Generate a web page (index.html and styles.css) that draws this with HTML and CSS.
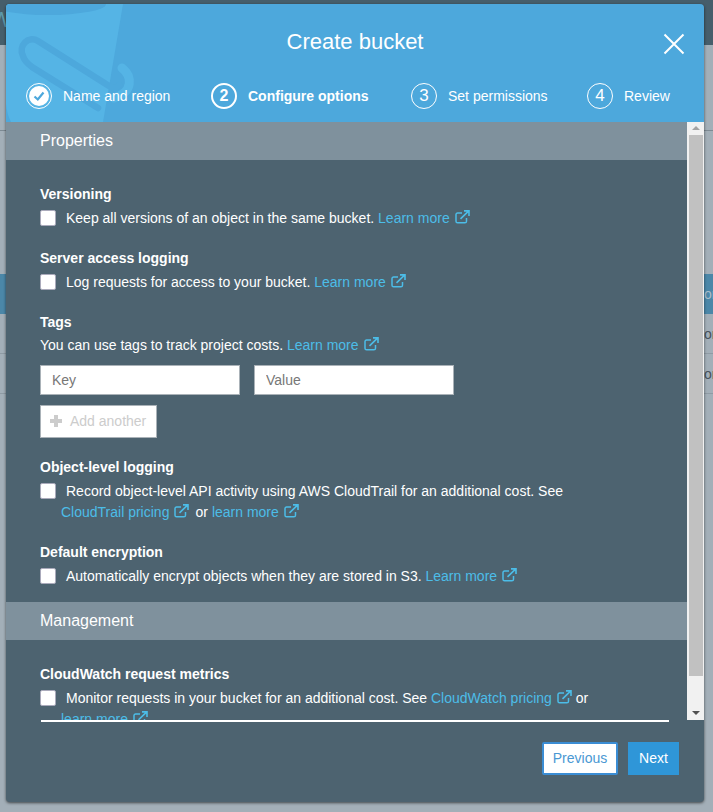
FILE: index.html
```html
<!DOCTYPE html>
<html lang="en">
<head>
  <meta charset="utf-8" />
  <title>Create bucket</title>
  <link rel="stylesheet" href="styles.css">
</head>
<body>
  <svg class="defs" width="0" height="0">
    <symbol id="ext" viewBox="0 0 15 14">
      <path d="M11.5 8v3.2a1.6 1.6 0 0 1-1.6 1.6H2.6A1.6 1.6 0 0 1 1 11.2V4.6A1.6 1.6 0 0 1 2.6 3H7" fill="none" stroke="currentColor" stroke-width="1.5"/>
      <path d="M5.5 8.8 13 1.6M9 .9h5v5" fill="none" stroke="currentColor" stroke-width="1.6"/>
    </symbol>
  </svg>

  <!-- page behind the dialog -->
  <div class="page">
    <div class="topbar"><span class="topbar-text">W</span></div>
    <div class="rule"></div>
    <div class="table">
      <div class="row row-head">on</div>
      <div class="row">on</div>
      <div class="row">on</div>
    </div>
  </div>

  <div class="modal">
    <header class="modal-head">
      <svg class="watermark" width="135" height="118" viewBox="0 0 135 118">
        <path d="M0 0H117L97 118H5Q1 110 0 100Z" fill="#55b4e5"/>
        <ellipse cx="42" cy="0" rx="58" ry="11" fill="#4da8dc"/>
        <path d="M116 64C126 72 128 88 108 94" stroke="#55b4e5" stroke-width="9" stroke-linecap="round" fill="none"/>
        <path d="M32 37 103 82C107 85 111 84 113 81M32 37C22 31 12 42 17 52 18 56 22 60 26 63L92 104" stroke="#4da8dc" stroke-width="6.5" stroke-linecap="round" fill="none"/>
      </svg>
      <h1 class="modal-title">Create bucket</h1>
      <button class="close" aria-label="Close">
        <svg width="22" height="22" viewBox="0 0 22 22"><path d="M1.5 1.5 20.5 20.5M20.5 1.5 1.5 20.5" stroke="#fff" stroke-width="2" fill="none"/></svg>
      </button>
      <ol class="steps">
        <li class="step">
          <span class="num num-done">
            <svg width="20" height="20" viewBox="0 0 20 20"><circle cx="10" cy="10" r="10" fill="#fff"/><path d="M5.5 10.5 8.8 13.5 14.5 6.5" stroke="#4da8dc" stroke-width="2.2" fill="none"/></svg>
          </span>
          Name and region
        </li>
        <li class="step step-active"><span class="num">2</span>Configure options</li>
        <li class="step"><span class="num">3</span>Set permissions</li>
        <li class="step"><span class="num">4</span>Review</li>
      </ol>
    </header>

    <div class="modal-main">
      <div class="scroll">
        <h2 class="section-bar">Properties</h2>
        <div class="section">
          <div class="opt">
            <h3 class="opt-title">Versioning</h3>
            <p class="check-line"><span class="check"></span>Keep all versions of an object in the same bucket. <a class="link">Learn more<svg class="ext"><use href="#ext"/></svg></a></p>
          </div>
          <div class="opt">
            <h3 class="opt-title">Server access logging</h3>
            <p class="check-line"><span class="check"></span>Log requests for access to your bucket. <a class="link">Learn more<svg class="ext"><use href="#ext"/></svg></a></p>
          </div>
          <div class="opt opt-tags">
            <h3 class="opt-title">Tags</h3>
            <p class="plain-line">You can use tags to track project costs. <a class="link">Learn more<svg class="ext"><use href="#ext"/></svg></a></p>
            <div class="tag-inputs">
              <input class="input" placeholder="Key" />
              <input class="input" placeholder="Value" />
            </div>
            <button class="btn-add"><span class="plus"></span>Add another</button>
          </div>
          <div class="opt">
            <h3 class="opt-title">Object-level logging</h3>
            <p class="check-line"><span class="check"></span>Record object-level API activity using AWS CloudTrail for an additional cost. See</p>
            <p class="cont-line"><a class="link">CloudTrail pricing<svg class="ext"><use href="#ext"/></svg></a><span class="or">or</span><a class="link">learn more<svg class="ext"><use href="#ext"/></svg></a></p>
          </div>
          <div class="opt">
            <h3 class="opt-title">Default encryption</h3>
            <p class="check-line"><span class="check"></span>Automatically encrypt objects when they are stored in S3. <a class="link">Learn more<svg class="ext"><use href="#ext"/></svg></a></p>
          </div>
        </div>
        <h2 class="section-bar">Management</h2>
        <div class="section">
          <div class="opt">
            <h3 class="opt-title">CloudWatch request metrics</h3>
            <p class="check-line"><span class="check"></span>Monitor requests in your bucket for an additional cost. See <a class="link">CloudWatch pricing<svg class="ext"><use href="#ext"/></svg></a> or</p>
            <p class="cont-line"><a class="link">learn more<svg class="ext"><use href="#ext"/></svg></a></p>
          </div>
        </div>
      </div>
      <div class="scrollbar">
        <span class="arrow arrow-up"></span>
        <span class="thumb"></span>
        <span class="arrow arrow-down"></span>
      </div>
    </div>

    <footer class="modal-foot">
      <button class="btn btn-prev">Previous</button>
      <button class="btn btn-next">Next</button>
    </footer>
  </div>
</body>
</html>
```

FILE: styles.css
```css
:root{
  --blue:#4da8dc;
  --slate:#4d6370;
  --bar:#7f919d;
  --link:#4cbde8;
}

* { box-sizing: border-box; }

html, body { height:100%; }

body{
  margin:0; overflow:hidden;
  font-family:"Liberation Sans", Arial, sans-serif; font-size:14px; color:#fff;
  background:#a3afb8;
}

.defs{ position:absolute; }

/* backdrop */
.page{ height:812px; overflow:hidden; }
.topbar{ height:45px; background:#465e6b; color:#5d98a8; font-size:22px; line-height:40px; overflow:hidden; }
.topbar-text{ margin-left:-9px; }
.rule{ height:1px; margin-top:85px; background:#7d8a93; }
.table{ margin-top:143px; }
.row{ height:40px; padding-left:704px; line-height:40px; color:#47535c; border-bottom:1px solid #8f9ba4; white-space:nowrap; overflow:hidden; }
.row-head{ background:#4b87a8; color:#a9bdca; border-bottom:0; }

/* dialog */
.modal{
  position:absolute; left:6px; top:4px; width:698px; height:798px;
  display:flex; flex-direction:column;
  background:var(--slate); border-radius:4px; overflow:hidden;
  box-shadow:0 1px 3px rgba(0,0,0,.6);
}

.modal-head{ position:relative; flex:0 0 118px; background:var(--blue); overflow:hidden; }
.watermark{ position:absolute; left:0; top:0; }
.modal-title{ position:relative; margin:0; padding-top:24px; text-align:center; font-size:22px; line-height:28px; font-weight:400; }
.close{ position:absolute; left:657px; top:29px; padding:0; border:0; background:none; line-height:0; }

.steps{
  list-style:none; margin:0; padding:0 0 0 20px;
  position:absolute; top:78px; left:0; right:0;
  display:grid; grid-template-columns:185px 200px 176px auto;
}
.step{ display:flex; align-items:center; gap:11px; height:28px; white-space:nowrap; }
.num{
  display:flex; align-items:center; justify-content:center;
  width:26px; height:26px; border:1px solid #fff; border-radius:50%;
  font-size:17px;
}
.step-active{ font-weight:700; }
.step-active .num{ border-width:2px; font-size:16px; }
.num-done svg{ display:block; }

.modal-main{ flex:0 0 598px; min-height:0; display:flex; }
.scroll{ width:681px; overflow:hidden; }

.section-bar{ margin:0; height:38px; padding-left:34px; background:var(--bar); font-size:16px; line-height:37px; font-weight:400; }
.section{ padding:25px 34px 0; }

.opt{ margin-bottom:21px; }
.opt:last-child{ margin-bottom:16px; }
.opt-tags{ margin-bottom:20px; }
.opt-title{ margin:0 0 5px; font-size:14px; line-height:18px; font-weight:700; }
.check-line{ display:flex; margin:0; line-height:20px; white-space:pre; }
.check{ flex:none; width:16px; height:16px; margin:2px 10px 0 0; background:#fff; border:1px solid #aab; border-radius:2px; }
.plain-line{ margin:-1px 0 0; line-height:20px; }
.cont-line{ margin:1px 0 0 21px; line-height:20px; }
.or{ margin:0 4px 0 6px; }

.link{ color:var(--link); }
.ext{ width:15px; height:14px; margin-left:5px; vertical-align:-1px; }

.tag-inputs{ display:flex; gap:14px; margin-top:10px; }
.input{ width:200px; height:30px; padding:0 11px; border:1px solid #aab2b8; background:#fff; font:14px "Liberation Sans", Arial, sans-serif; }
.input::placeholder{ color:#777; opacity:1; }

.btn-add{
  display:flex; align-items:center; gap:8px;
  width:117px; height:33px; margin-top:10px; padding:0 9px 2px;
  border:1px solid #aab2b8; background:#fff; color:#ccc;
  font:14px "Liberation Sans", Arial, sans-serif;
}
.plus{ width:12px; height:12px; background:linear-gradient(#ccc,#ccc) center/12px 4px no-repeat, linear-gradient(#ccc,#ccc) center/4px 12px no-repeat; }

.scrollbar{ width:17px; background:#f1f1f1; display:flex; flex-direction:column; align-items:center; }
.arrow{ flex:none; width:0; height:0; border:4px solid transparent; }
.arrow-up{ margin-top:4px; border-top:0; border-bottom-color:#a3a3a3; }
.arrow-down{ margin-top:auto; margin-bottom:5px; border-bottom:0; border-top-color:#505050; }
.thumb{ width:14px; height:541px; margin-top:5px; background:#c1c1c1; }

.modal-foot{
  position:relative; flex:1; display:flex; justify-content:flex-end; gap:10px;
  padding:22px 25px 0 0;
}
.modal-foot::before{ content:""; position:absolute; left:35px; top:0; width:628px; height:2px; background:#fff; }
.btn{ height:33px; padding:0 0 2px; border:0; font:14px "Liberation Sans", Arial, sans-serif; }
.btn-prev{ width:76px; background:#fff; color:#4a98d3; border:2px solid #3b8dd4; border-radius:2px; }
.btn-next{ width:51px; background:#2f96d8; color:#fff; }
```
